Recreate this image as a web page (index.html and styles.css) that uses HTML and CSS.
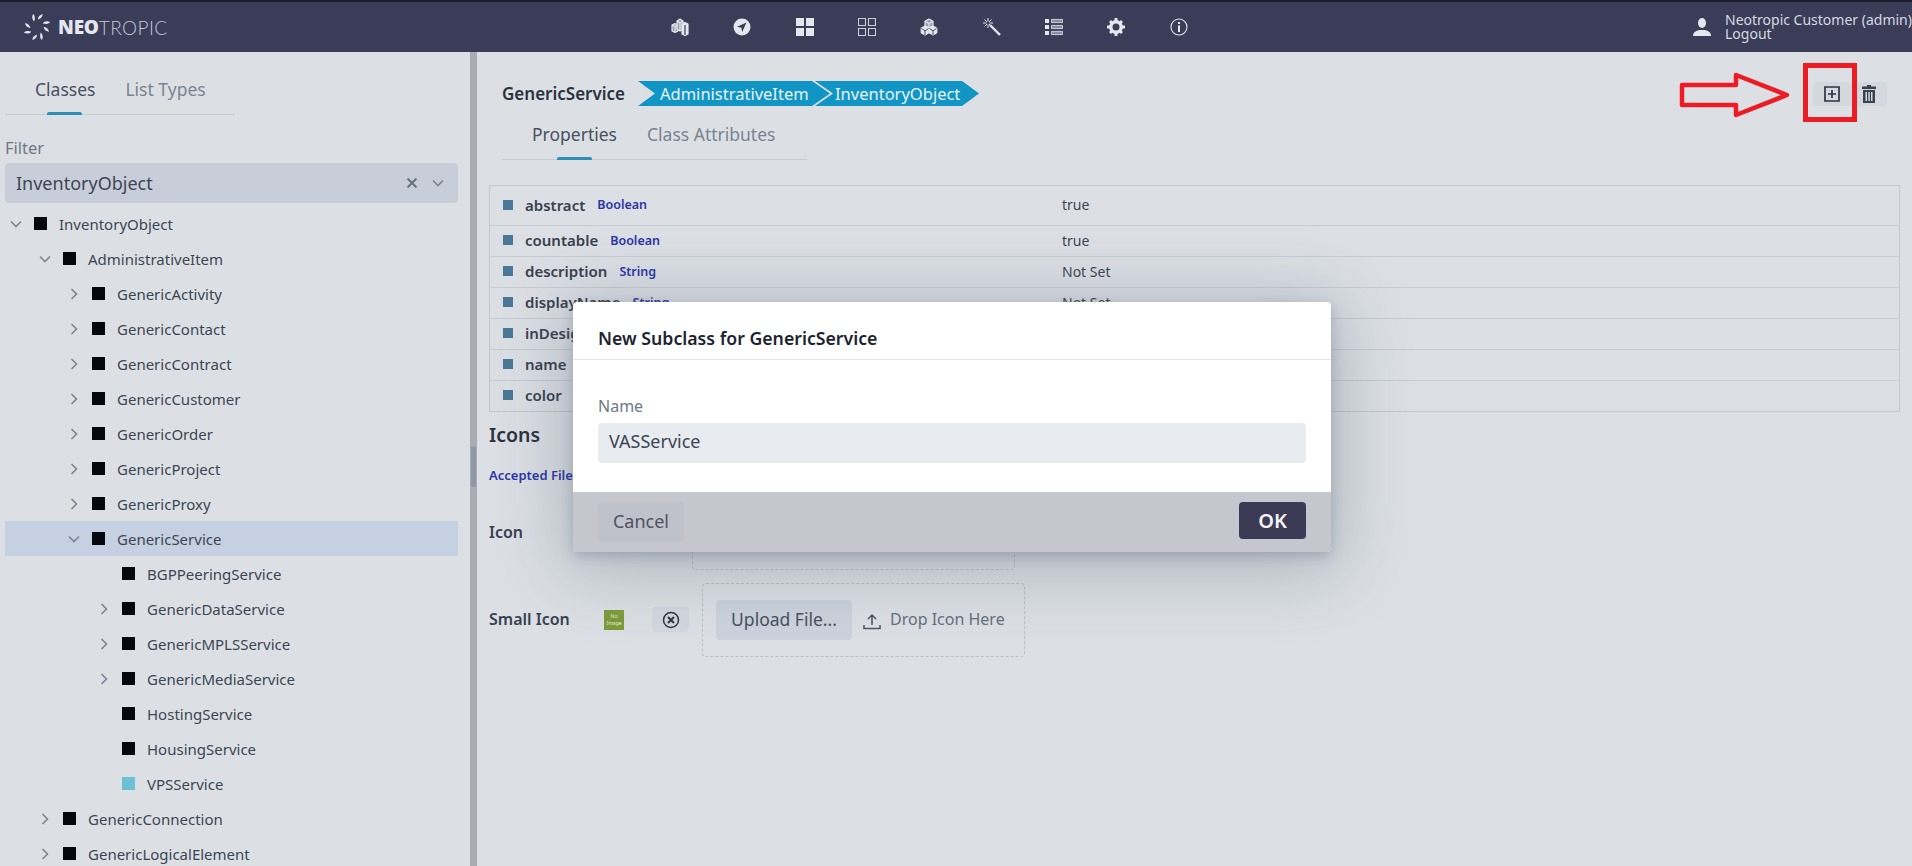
FILE: index.html
```html
<!DOCTYPE html>
<html lang="en">
<head>
    <meta charset="UTF-8">
    <meta name="viewport" content="width=device-width, initial-scale=1.0">
    <title>Neotropic</title>
    <link rel="stylesheet" href="styles.css">
</head>
<body>
    <svg class="defs" width="0" height="0">
        <symbol id="down" viewBox="0 0 14 14"><path d="M2 4.500l5 5 5-5" fill="none" stroke="#7b8490" stroke-width="1.600"/></symbol>
        <symbol id="right" viewBox="0 0 14 14"><path d="M4.500 2l5 5-5 5" fill="none" stroke="#7b8490" stroke-width="1.600"/></symbol>
    </svg>

    <header class="topbar">
        <div class="logo">
            <svg class="logo-mark" viewBox="0 0 30 30" width="28" height="30" fill="#e4e7ee">
                <path d="M11 1c2 2 2 5 1 8-2-2-3-5-1-8z"/>
                <path d="M21 1c0 3-2 5-5 6 0-3 2-5 5-6z"/>
                <path d="M29 10c-2 2-5 2-8 1 2-2 5-3 8-1z"/>
                <path d="M28 20c-3 0-5-2-6-5 3 0 5 2 6 5z"/>
                <path d="M20 29c-2-2-2-5-1-8 2 2 3 5 1 8z"/>
                <path d="M10 29c0-3 2-5 5-6 0 3-2 5-5 6z"/>
                <path d="M1 21c2-2 5-2 8-1-2 2-5 3-8 1z"/>
                <path d="M2 11c3 0 5 2 6 5-3 0-5-2-6-5z"/>
            </svg>
            <span class="logo-neo">NEO</span><span class="logo-tropic">TROPIC</span>
        </div>
        <nav class="nav">
            <span class="nav-item"><svg viewBox="0 0 18 18" width="18" height="18" stroke="#e4e7ee" stroke-width="1.200" stroke-linejoin="round"><path d="M1 7l3-1.500L7 7v6l-3 1.500L1 13z" fill="#9a9db0"/><path d="M6 3l3-2 3 2v8l-3 2-3-2z" fill="#9a9db0"/><path d="M11 6l3-1.500L17 6v10l-3 1.500L11 16z" fill="#e4e7ee"/><path d="M1 7l3 1.500L7 7M4 8.500v6M6 3l3 2 3-2M9 5v8" fill="none"/><path d="M14 7v10" stroke="#3a3c58" fill="none"/></svg></span>
            <span class="nav-item"><svg viewBox="0 0 18 18" width="18" height="18"><circle cx="9" cy="9" r="8.500" fill="#e4e7ee"/><path d="M13.500 4.500L4 8.800l4.300.9.9 4.300z" fill="#3a3c58"/></svg></span>
            <span class="nav-item"><svg viewBox="0 0 18 18" width="18" height="18" fill="#e4e7ee"><path d="M0 0h8v8H0zM10 0h8v8h-8zM0 10h8v8H0zM10 10h8v8h-8z"/></svg></span>
            <span class="nav-item"><svg viewBox="0 0 18 18" width="18" height="18" fill="none" stroke="#c9cdd8" stroke-width="1.100"><path d="M.5.5h7v7h-7zM10.500.5h7v7h-7zM.5 10.500h7v7h-7zM10.500 10.500h7v7h-7z"/></svg></span>
            <span class="nav-item"><svg viewBox="0 0 18 18" width="18" height="18" stroke="#e4e7ee" stroke-width="1.200" stroke-linejoin="round"><path d="M9 1l4 2.200v4.600L9 10 5 7.800V3.200z" fill="#9a9db0"/><path d="M5 8l3.800 2.200v4.600L5 17l-3.800-2.200v-4.600z" fill="#e4e7ee"/><path d="M13 8l3.800 2.200v4.600L13 17l-3.800-2.200v-4.600z" fill="#e4e7ee"/><path d="M5 3.200L9 5.500l4-2.300M9 5.500V10" fill="none"/><path d="M1.500 10.500L5 12.800l3.500-2.300M5 12.800V17M9.500 10.500l3.500 2.300 3.500-2.300M13 12.800V17" fill="none" stroke="#3a3c58" stroke-width=".9"/></svg></span>
            <span class="nav-item"><svg viewBox="0 0 18 18" width="18" height="18" fill="none" stroke="#e4e7ee"><path d="M7 7l10 10" stroke-width="2.400"/><path d="M5 0v3.500M5 6.500v3.500M0 5h3.500M6.500 5h3.500M1.500 1.500l2.500 2.500M6 6l2.500 2.500M8.500 1.500L6 4M4 6L1.500 8.500" stroke-width="1"/></svg></span>
            <span class="nav-item"><svg viewBox="0 0 18 18" width="18" height="18" fill="#e4e7ee"><path d="M0 1h4v4H0zM0 7h4v4H0zM0 13h4v4H0z"/><path d="M6.400 1.400h11.200v3.200H6.400zM6.400 7.400h11.200v3.200H6.400zM6.400 13.400h11.200v3.200H6.400z" fill="#8d90a4" stroke="#e4e7ee" stroke-width=".8"/></svg></span>
            <span class="nav-item"><svg viewBox="0 0 18 18" width="18" height="18"><circle cx="9" cy="9" r="5.200" fill="none" stroke="#e4e7ee" stroke-width="3.400"/><path d="M7.500 0h3v3h-3zM7.500 15h3v3h-3zM0 7.500h3v3H0zM15 7.500h3v3h-3zM2 4l2-2 2 2-2 2zM12 4l2-2 2 2-2 2zM2 14l2-2 2 2-2 2zM12 14l2-2 2 2-2 2z" fill="#e4e7ee"/></svg></span>
            <span class="nav-item"><svg viewBox="0 0 18 18" width="18" height="18"><circle cx="9" cy="9" r="8" fill="none" stroke="#e4e7ee" stroke-width="1.100"/><path d="M8 4h2v2H8zM8 7.500h2V14H8z" fill="#e4e7ee"/></svg></span>
        </nav>
        <div class="user">
            <svg viewBox="0 0 18 18" width="18" height="18" fill="#e4e7ee"><ellipse cx="9" cy="5" rx="4" ry="5"/><path d="M0 18c0-4 3-5 6-6h6c3 1 6 2 6 6z"/></svg>
            <div class="user-text">
                <div>Neotropic Customer (admin)</div>
                <div>Logout</div>
            </div>
        </div>
    </header>

    <div class="layout">
        <aside class="sidebar">
            <div class="tabs side-tabs">
                <span class="tab active">Classes</span>
                <span class="tab">List Types</span>
            </div>
            <div class="filter-label">Filter</div>
            <div class="combo">
                <span class="combo-value">InventoryObject</span>
                <svg viewBox="0 0 12 12" width="12" height="12" fill="none" stroke="#66707c" stroke-width="1.800"><path d="M1.500 1.500l9 9M10.500 1.500l-9 9"/></svg>
                <svg class="combo-caret" viewBox="0 0 14 14" width="14" height="14"><use href="#down"/></svg>
            </div>
            <div class="tree">
                <div class="row d0"><svg class="chev"><use href="#down"/></svg><i class="swatch"></i>InventoryObject</div>
                <div class="row d1"><svg class="chev"><use href="#down"/></svg><i class="swatch"></i>AdministrativeItem</div>
                <div class="row d2"><svg class="chev"><use href="#right"/></svg><i class="swatch"></i>GenericActivity</div>
                <div class="row d2"><svg class="chev"><use href="#right"/></svg><i class="swatch"></i>GenericContact</div>
                <div class="row d2"><svg class="chev"><use href="#right"/></svg><i class="swatch"></i>GenericContract</div>
                <div class="row d2"><svg class="chev"><use href="#right"/></svg><i class="swatch"></i>GenericCustomer</div>
                <div class="row d2"><svg class="chev"><use href="#right"/></svg><i class="swatch"></i>GenericOrder</div>
                <div class="row d2"><svg class="chev"><use href="#right"/></svg><i class="swatch"></i>GenericProject</div>
                <div class="row d2"><svg class="chev"><use href="#right"/></svg><i class="swatch"></i>GenericProxy</div>
                <div class="row d2 selected"><svg class="chev"><use href="#down"/></svg><i class="swatch"></i>GenericService</div>
                <div class="row d3"><span class="chev"></span><i class="swatch"></i>BGPPeeringService</div>
                <div class="row d3"><svg class="chev"><use href="#right"/></svg><i class="swatch"></i>GenericDataService</div>
                <div class="row d3"><svg class="chev"><use href="#right"/></svg><i class="swatch"></i>GenericMPLSService</div>
                <div class="row d3"><svg class="chev"><use href="#right"/></svg><i class="swatch"></i>GenericMediaService</div>
                <div class="row d3"><span class="chev"></span><i class="swatch"></i>HostingService</div>
                <div class="row d3"><span class="chev"></span><i class="swatch"></i>HousingService</div>
                <div class="row d3"><span class="chev"></span><i class="swatch teal"></i>VPSService</div>
                <div class="row d1"><svg class="chev"><use href="#right"/></svg><i class="swatch"></i>GenericConnection</div>
                <div class="row d1"><svg class="chev"><use href="#right"/></svg><i class="swatch"></i>GenericLogicalElement</div>
            </div>
        </aside>
        <div class="splitter"><div class="splitter-handle"></div></div>
        <main class="content">
            <div class="title-row">
                <span class="class-name">GenericService</span>
                <div class="crumbs">
                    <span class="crumb crumb-first">AdministrativeItem</span>
                    <span class="crumb crumb-last">InventoryObject</span>
                </div>
                <div class="actions">
                    <button class="icon-btn">
                        <svg viewBox="0 0 16 16" width="16" height="16" fill="none" stroke="#2d3542" stroke-width="1.700"><path d="M1 1h14v14H1z"/><path d="M8 4v8M4 8h8"/></svg>
                    </button>
                    <button class="icon-btn">
                        <svg viewBox="0 0 14 18" width="14" height="18" fill="#3b4350"><path d="M5 0h4v1.500h5v2.500H0V1.500h5zM1 5h12v13H1zM3.500 7v9h1.500V7zM6.300 7v9h1.500V7zM9 7v9h1.500V7z" fill-rule="evenodd"/></svg>
                    </button>
                </div>
            </div>
            <div class="tabs main-tabs">
                <span class="tab active">Properties</span>
                <span class="tab">Class Attributes</span>
            </div>
            <div class="props">
                <div class="prop prop-tall"><div class="prop-name"><i class="prop-mark"></i><b>abstract</b><em>Boolean</em></div><div>true</div></div>
                <div class="prop"><div class="prop-name"><i class="prop-mark"></i><b>countable</b><em>Boolean</em></div><div>true</div></div>
                <div class="prop"><div class="prop-name"><i class="prop-mark"></i><b>description</b><em>String</em></div><div>Not Set</div></div>
                <div class="prop"><div class="prop-name"><i class="prop-mark"></i><b>displayName</b><em>String</em></div><div>Not Set</div></div>
                <div class="prop"><div class="prop-name"><i class="prop-mark"></i><b>inDesign</b><em>Boolean</em></div><div>false</div></div>
                <div class="prop"><div class="prop-name"><i class="prop-mark"></i><b>name</b><em>String</em></div><div>GenericService</div></div>
                <div class="prop"><div class="prop-name"><i class="prop-mark"></i><b>color</b><em>Color</em></div><div>Not Set</div></div>
            </div>
            <h2 class="icons-title">Icons</h2>
            <div class="accepted">Accepted File Types: .png, .jpg, .svg</div>
            <div class="icon-row">
                <span class="icon-label">Icon</span>
                <div class="dropzone dropzone-big"></div>
            </div>
            <div class="icon-row small-row">
                <span class="icon-label">Small Icon</span>
                <div class="no-image">No<br>Image</div>
                <button class="clear-btn">
                    <svg viewBox="0 0 18 18" width="18" height="18" fill="none" stroke="#2d3542"><circle cx="9" cy="9" r="7.500" stroke-width="1.500"/><path d="M6 6l6 6M12 6l-6 6" stroke-width="2"/></svg>
                </button>
                <div class="dropzone">
                    <button class="upload-btn">Upload File...</button>
                    <svg class="upload-icon" viewBox="0 0 18 18" width="18" height="18" fill="none" stroke="#4a5362" stroke-width="1.500"><path d="M9 13V3M5 7l4-4 4 4M1 13v3.500h16V13"/></svg>
                    <span class="drop-text">Drop Icon Here</span>
                </div>
            </div>
        </main>
    </div>

    <div class="modal">
        <div class="modal-title">New Subclass for GenericService</div>
        <div class="modal-body">
            <div class="field-label">Name</div>
            <div class="field-input">VASService</div>
        </div>
        <div class="modal-footer">
            <button class="btn-cancel">Cancel</button>
            <button class="btn-ok">OK</button>
        </div>
    </div>

    <svg class="callout" viewBox="0 0 182 62" width="182" height="62" fill="none" stroke="#ed1c24" stroke-width="4.500">
        <path d="M127.500 4.500h49v54h-49z" stroke-width="5"/>
        <path d="M4 24h54V14l51 20-51 20V44H4z" stroke-linejoin="round"/>
    </svg>
</body>
</html>
```

FILE: styles.css
```css
* {
    box-sizing: border-box;
}
html, body {
    height: 100%;
}
body {
    margin: 0;
    font-family: "Noto Sans", "Open Sans", sans-serif;
    background-color: #dce0e5;
    color: #3d4653;
    overflow: hidden;
}
button {
    font-family: inherit;
    border: none;
    cursor: pointer;
}
.defs {
    position: absolute;
}
.topbar {
    height: 52px;
    background-color: #3a3c58;
    border-top: 2px solid #1c1d2a;
    display: flex;
    align-items: center;
}
.logo {
    width: 649px;
    padding-left: 23px;
    display: flex;
    align-items: center;
    color: #e4e7ee;
    font-size: 19px;
}
.logo-mark {
    margin-right: 7px;
}
.logo-neo {
    font-family: "Open Sans", sans-serif;
    font-weight: 800;
    letter-spacing: -0.2px;
}
.logo-tropic {
    font-family: Lato, sans-serif;
    font-weight: 300;
    font-size: 19px;
    letter-spacing: 0.4px;
    color: #c4c7d4;
}
.nav {
    display: flex;
}
.nav-item {
    width: 62.3px;
    display: flex;
    justify-content: center;
    align-items: center;
}
.user {
    margin-left: auto;
    display: flex;
    align-items: center;
    color: #d5d9e0;
    font-size: 14px;
    line-height: 14px;
    white-space: nowrap;
}
.user svg {
    margin-right: 14px;
}
.user-text {
    width: 187px;
}
.layout {
    display: flex;
    height: 814px;
}
.sidebar {
    width: 470px;
    padding: 0 12px 0 5px;
    flex-shrink: 0;
}
.splitter {
    width: 7px;
    flex-shrink: 0;
    background-color: #a9adb3;
    padding-top: 395px;
}
.splitter-handle {
    height: 40px;
    margin: 0 1px;
    background-color: #8f98a6;
}
.tabs {
    display: flex;
    align-items: center;
    border-bottom: 1px solid #c6ccd4;
    font-size: 17.500px;
    color: #7b8490;
}
.tab {
    padding: 0 15px;
    height: 100%;
    display: flex;
    align-items: center;
    position: relative;
}
.tab.active {
    color: #49515e;
}
.tab.active::after {
    content: "";
    position: absolute;
    left: 50%;
    bottom: -1px;
    width: 35px;
    height: 3px;
    margin-left: -18px;
    background-color: #2d8fb5;
    border-radius: 2px 2px 0 0;
}
.side-tabs {
    width: 230px;
    height: 55px;
    margin-top: 8px;
    padding: 0 0 0 15px;
}
.side-tabs .tab {
    padding-top: 4px;
}
.filter-label {
    margin-top: 22px;
    height: 26px;
    font-size: 16.500px;
    line-height: 21px;
    color: #6f7985;
}
.combo {
    height: 40px;
    background-color: #c8ced9;
    border-radius: 4px;
    display: flex;
    align-items: center;
    padding: 0 13px 0 11px;
    font-size: 18px;
    color: #3d4653;
}
.combo-value {
    flex: 1;
}
.combo-caret {
    margin-left: 13px;
}
.tree {
    margin-top: 3px;
    font-size: 15px;
}
.row {
    height: 35px;
    display: flex;
    align-items: center;
    white-space: nowrap;
}
.row.selected {
    background-color: #c5d1e2;
}
.d0 { padding-left: 4px; }
.d1 { padding-left: 33px; }
.d2 { padding-left: 62px; }
.d3 { padding-left: 92px; }
.chev {
    width: 14px;
    height: 14px;
    margin-right: 11px;
    flex-shrink: 0;
}
.swatch {
    width: 13px;
    height: 13px;
    margin-right: 12px;
    background-color: #05080f;
    flex-shrink: 0;
}
.swatch.teal {
    background-color: #6cc0d4;
}
.content {
    flex: 1;
    padding: 29px 12px 0;
    min-width: 0;
}
.title-row {
    height: 25px;
    padding-left: 13px;
    display: flex;
    align-items: center;
}
.class-name {
    width: 136px;
    font-size: 17px;
    font-weight: 600;
    color: #2b3340;
    padding-bottom: 1px;
}
.crumbs {
    display: flex;
}
.crumb {
    height: 25px;
    display: flex;
    align-items: center;
    background-color: #1195c4;
    color: #e8f3f8;
    font-size: 16.500px;
    white-space: nowrap;
}
.crumb-first {
    width: 192px;
    padding-left: 22px;
    clip-path: polygon(0 0, 174px 0, 192px 12.500px, 174px 25px, 0 25px, 17px 12.500px);
}
.crumb-last {
    width: 164px;
    margin-left: -15px;
    padding-left: 20px;
    clip-path: polygon(0 0, 147px 0, 164px 12.500px, 147px 25px, 0 25px, 18px 12.500px);
}
.actions {
    margin-left: auto;
    margin-right: 13px;
    display: flex;
}
.icon-btn {
    width: 37px;
    height: 24px;
    background-color: #d3d8df;
    display: flex;
    align-items: center;
    justify-content: center;
    padding: 0;
    border-radius: 4px;
}
.main-tabs {
    width: 305px;
    height: 54px;
    margin-left: 13px;
    padding-left: 15px;
}
.main-tabs .tab {
    padding-top: 3px;
    padding-bottom: 1px;
}
.props {
    margin-top: 25px;
    border: 1px solid #c3c8cf;
    font-size: 14px;
    color: #3d4653;
}
.prop {
    height: 31px;
    display: flex;
    align-items: center;
    padding-bottom: 2px;
    border-bottom: 1px solid #c6ccd4;
}
.prop:last-child {
    border-bottom: none;
    height: 30px;
}
.prop-tall {
    height: 40px;
}
.prop-name {
    width: 572px;
    padding-left: 13px;
    display: flex;
    align-items: center;
}
.prop-mark {
    width: 10px;
    height: 10px;
    margin-right: 12px;
    background-color: #4a7896;
}
.prop-name b {
    font-size: 15px;
    font-weight: 600;
    color: #39414e;
}
.prop-name em {
    margin-left: 12px;
    font-size: 12.500px;
    font-style: normal;
    font-weight: 600;
    color: #2b35a8;
}
.icons-title {
    margin: 9px 0 0;
    height: 30px;
    font-size: 19.500px;
    line-height: 28px;
    font-weight: 600;
    color: #2b3340;
}
.accepted {
    margin-top: 15px;
    height: 20px;
    font-size: 13px;
    line-height: 18px;
    font-weight: 600;
    color: #2b35a8;
}
.icon-row {
    margin-top: 10px;
    height: 73px;
    display: flex;
    align-items: center;
}
.small-row {
    margin-top: 14px;
}
.icon-label {
    width: 115px;
    padding-bottom: 2px;
    font-size: 16px;
    font-weight: 600;
    color: #39414e;
}
.no-image {
    width: 20px;
    height: 20px;
    background-color: #7d9c3c;
    color: #e6eed4;
    font-size: 5px;
    line-height: 7px;
    text-align: center;
    padding-top: 3px;
}
.clear-btn {
    width: 37px;
    height: 25px;
    margin: 0 13px 0 28px;
    padding: 0;
    background-color: #d3d8df;
    border-radius: 4px;
    display: flex;
    align-items: center;
    justify-content: center;
}
.dropzone {
    width: 323px;
    height: 74px;
    border: 1px dashed #b9bfc8;
    border-radius: 4px;
    padding-left: 13px;
    display: flex;
    align-items: center;
}
.dropzone-big {
    margin-left: 88px;
}
.upload-btn {
    width: 136px;
    height: 40px;
    background-color: #ccd3dc;
    color: #49515e;
    font-size: 17.500px;
    border-radius: 4px;
    padding: 0 0 2px;
}
.upload-icon {
    margin: 3px 9px 0 11px;
}
.drop-text {
    font-size: 16px;
    color: #66707c;
    white-space: nowrap;
    padding-bottom: 1px;
}
.modal {
    position: absolute;
    left: 573px;
    top: 302px;
    width: 758px;
    height: 250px;
    background-color: #fff;
    border-radius: 4px;
    display: flex;
    flex-direction: column;
    box-shadow: 0 10px 70px 10px rgba(70, 80, 100, 0.3), 0 4px 12px rgba(60, 70, 90, 0.25);
}
.modal-title {
    height: 58px;
    padding: 23px 25px 0;
    border-bottom: 1px solid #e6e8ec;
    font-size: 17.700px;
    line-height: 26px;
    font-weight: 600;
    color: #1c2430;
}
.modal-body {
    flex: 1;
    padding: 34px 25px 0;
}
.field-label {
    height: 29px;
    font-size: 16px;
    line-height: 24px;
    color: #6f7985;
}
.field-input {
    height: 40px;
    background-color: #e8ebf0;
    border-radius: 4px;
    padding-left: 11px;
    font-size: 18px;
    line-height: 36px;
    color: #3d4653;
}
.modal-footer {
    height: 60px;
    padding: 10px 25px 0;
    background-color: #c6c6cf;
    display: flex;
    justify-content: space-between;
    align-items: flex-start;
    border-radius: 0 0 4px 4px;
}
.btn-cancel {
    width: 86px;
    height: 40px;
    background-color: #bfc1cb;
    color: #4e5360;
    font-size: 18px;
    padding: 0 0 2px;
    border-radius: 4px;
}
.btn-ok {
    width: 67px;
    height: 37px;
    background-color: #3d3a55;
    color: #f2f2f6;
    font-size: 20px;
    font-weight: 600;
    padding: 0 0 1px;
    border-radius: 4px;
}
.callout {
    position: absolute;
    left: 1678px;
    top: 61px;
}
```
